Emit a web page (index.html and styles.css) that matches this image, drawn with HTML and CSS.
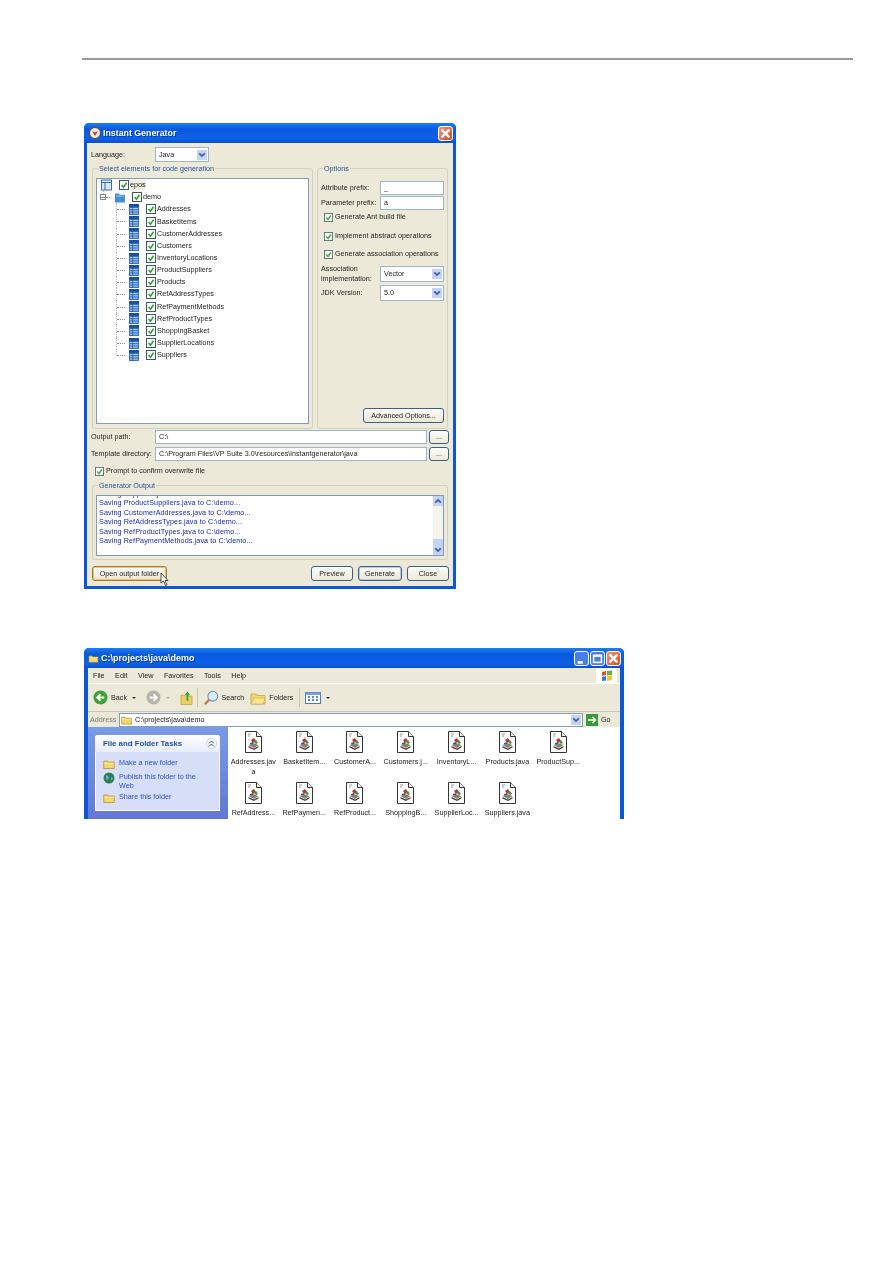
FILE: index.html
```html
<!DOCTYPE html>
<html lang="en">
<head>
<meta charset="utf-8">
<title>Instant Generator</title>
<link rel="stylesheet" href="styles.css">
</head>
<body>
<svg class="defs" width="0" height="0" aria-hidden="true">
  <symbol id="table" viewBox="0 0 11 12">
    <rect x="0" y="0" width="11" height="12" fill="#2f6fc4"/>
    <rect x="0" y="0" width="11" height="3" fill="#1a4f9c"/>
    <path d="M1 5h9M1 7.5h9M1 10h9" stroke="#cfe2fa" stroke-width="1"/>
    <path d="M4 3v9" stroke="#184a92" stroke-width=".7"/>
  </symbol>
  <symbol id="check" viewBox="0 0 10 10">
    <rect x=".5" y=".5" width="9" height="9" fill="#fff" stroke="#3a5a6a"/>
    <path d="M2.500 5l2 2.200 3-4.400" fill="none" stroke="#2aa32a" stroke-width="1.600"/>
  </symbol>
  <symbol id="arrow" viewBox="0 0 9 9">
    <rect width="9" height="9" fill="#c4d3f5"/>
    <path d="M2 3l2.500 2.500L7 3" fill="none" stroke="#3f5f9f" stroke-width="1.600"/>
  </symbol>
  <symbol id="jfile" viewBox="0 0 17 22">
    <path d="M.5.5h11l5 5v16H.5z" fill="#fff" stroke="#333"/>
    <path d="M11.500.5v5h5" fill="#eee" stroke="#333"/>
    <path d="M3 3h3M3 5h2" stroke="#999"/>
    <path d="M3.500 14l4.500-2 5.500 2-4.500 3z" fill="#8a8074"/>
    <path d="M6 9l3-2 2 3-3 2z" fill="#c0352d"/>
    <path d="M9 11l2-2 2 3-2 1z" fill="#3a9a3a"/>
    <path d="M5 12l3-1v2H5z" fill="#3456b5"/>
    <path d="M3.500 15l5.500 2.600 4.500-2.600v1.500l-4.500 2.500-5.500-2.500z" fill="#4a4238"/>
  </symbol>
  <symbol id="folder" viewBox="0 0 16 14">
    <path d="M1 3h5l1 1.500h8V13H1z" fill="#f6d76b" stroke="#b08a2a"/>
    <path d="M1 6h14" stroke="#fff0b0"/>
  </symbol>
</svg>

<main class="page">
  <hr class="rule">

  <section class="win dialog">
    <header class="titlebar">
      <svg class="app-icon" viewBox="0 0 12 12"><circle cx="6" cy="6" r="5.500" fill="#f4efe0" stroke="#7a3a20"/><path d="M3 4l3 5 3-5-3 1.500z" fill="#c5391e"/></svg>
      <span class="title">Instant Generator</span>
      <span class="wbtn close dlg-close"><svg viewBox="0 0 10 10"><path d="M2 2l6 6M8 2l-6 6" stroke="#fff" stroke-width="1.800"/></svg></span>
    </header>
    <div class="dialog-body">
      <div class="lang-row">
        <span class="lang-label">Language:</span>
        <span class="combo lang-combo"><span>Java</span><svg class="arr"><use href="#arrow"/></svg></span>
      </div>

      <div class="top-grid">
        <div class="group">
          <span class="legend">Select elements for code generation</span>
          <div class="tree">
            <div class="row lv0"><svg class="root-ic" viewBox="0 0 11 12"><rect x=".5" y="1" width="10" height="10" fill="#dbe8f8" stroke="#3a6ea8"/><path d="M.5 3.500h10M4 3.500V11" stroke="#3a6ea8"/></svg><svg class="ck"><use href="#check"/></svg><span class="sel">epos</span></div>
            <div class="row lv1"><span class="minus"></span><svg class="fold-ic" viewBox="0 0 11 11"><path d="M0 1h4l1 1.500h6V11H0z" fill="#3f8fd8"/><path d="M1 4h9" stroke="#9cc9f0"/></svg><svg class="ck"><use href="#check"/></svg><span>demo</span></div>
            <div class="row lv2"><span class="dash"></span><svg class="tb"><use href="#table"/></svg><svg class="ck"><use href="#check"/></svg><span>Addresses</span></div>
            <div class="row lv2"><span class="dash"></span><svg class="tb"><use href="#table"/></svg><svg class="ck"><use href="#check"/></svg><span>BasketItems</span></div>
            <div class="row lv2"><span class="dash"></span><svg class="tb"><use href="#table"/></svg><svg class="ck"><use href="#check"/></svg><span>CustomerAddresses</span></div>
            <div class="row lv2"><span class="dash"></span><svg class="tb"><use href="#table"/></svg><svg class="ck"><use href="#check"/></svg><span>Customers</span></div>
            <div class="row lv2"><span class="dash"></span><svg class="tb"><use href="#table"/></svg><svg class="ck"><use href="#check"/></svg><span>InventoryLocations</span></div>
            <div class="row lv2"><span class="dash"></span><svg class="tb"><use href="#table"/></svg><svg class="ck"><use href="#check"/></svg><span>ProductSuppliers</span></div>
            <div class="row lv2"><span class="dash"></span><svg class="tb"><use href="#table"/></svg><svg class="ck"><use href="#check"/></svg><span>Products</span></div>
            <div class="row lv2"><span class="dash"></span><svg class="tb"><use href="#table"/></svg><svg class="ck"><use href="#check"/></svg><span>RefAddressTypes</span></div>
            <div class="row lv2"><span class="dash"></span><svg class="tb"><use href="#table"/></svg><svg class="ck"><use href="#check"/></svg><span>RefPaymentMethods</span></div>
            <div class="row lv2"><span class="dash"></span><svg class="tb"><use href="#table"/></svg><svg class="ck"><use href="#check"/></svg><span>RefProductTypes</span></div>
            <div class="row lv2"><span class="dash"></span><svg class="tb"><use href="#table"/></svg><svg class="ck"><use href="#check"/></svg><span>ShoppingBasket</span></div>
            <div class="row lv2"><span class="dash"></span><svg class="tb"><use href="#table"/></svg><svg class="ck"><use href="#check"/></svg><span>SupplierLocations</span></div>
            <div class="row lv2 last"><span class="dash"></span><svg class="tb"><use href="#table"/></svg><svg class="ck"><use href="#check"/></svg><span>Suppliers</span></div>
          </div>
        </div>

        <div class="group options">
          <span class="legend">Options</span>
          <div class="opt-field"><span>Attribute prefix:</span><span class="input">_</span></div>
          <div class="opt-field"><span>Parameter prefix:</span><span class="input">a</span></div>
          <div class="opt-check first"><svg class="ck soft"><use href="#check"/></svg><span>Generate Ant build file</span></div>
          <div class="opt-check second"><svg class="ck soft"><use href="#check"/></svg><span>Implement abstract operations</span></div>
          <div class="opt-check"><svg class="ck soft"><use href="#check"/></svg><span>Generate association operations</span></div>
          <div class="opt-field assoc"><span>Association<br>implementation:</span><span class="combo"><span>Vector</span><svg class="arr"><use href="#arrow"/></svg></span></div>
          <div class="opt-field jdk"><span>JDK Version:</span><span class="combo"><span>5.0</span><svg class="arr"><use href="#arrow"/></svg></span></div>
          <div class="adv-row"><button class="btn adv">Advanced Options...</button></div>
        </div>
      </div>

      <div class="path-row first"><span class="path-label">Output path:</span><span class="input path">C:\</span><button class="btn dots">...</button></div>
      <div class="path-row"><span class="path-label">Template directory:</span><span class="input path">C:\Program Files\VP Suite 3.0\resources\instantgenerator\java</span><button class="btn dots">...</button></div>

      <div class="prompt"><svg class="ck soft"><use href="#check"/></svg><span>Prompt to confirm overwrite file</span></div>

      <div class="group output">
        <span class="legend">Generator Output</span>
        <div class="log">
          <div class="log-lines">
            <div class="clipline">Saving Suppliers.java to C:\demo...</div>
            <div>Saving ProductSuppliers.java to C:\demo...</div>
            <div>Saving CustomerAddresses.java to C:\demo...</div>
            <div>Saving RefAddressTypes.java to C:\demo...</div>
            <div>Saving RefProductTypes.java to C:\demo...</div>
            <div>Saving RefPaymentMethods.java to C:\demo...</div>
          </div>
          <div class="scroll">
            <span class="sb-btn"><svg viewBox="0 0 9 9"><path d="M2 6l2.500-2.500L7 6" fill="none" stroke="#3f5f9f" stroke-width="1.600"/></svg></span>
            <span class="sb-track"></span>
            <span class="sb-thumb"></span>
            <span class="sb-btn"><svg viewBox="0 0 9 9"><path d="M2 3l2.500 2.500L7 3" fill="none" stroke="#3f5f9f" stroke-width="1.600"/></svg></span>
          </div>
        </div>
      </div>

      <div class="actions">
        <span class="open-wrap">
          <button class="btn open">Open output folder</button>
          <svg class="cursor" viewBox="0 0 9 15"><path d="M1 1v10l2.500-2 2 4.500 1.500-.7-2-4.300H8z" fill="#fff" stroke="#222" stroke-width=".8"/></svg>
        </span>
        <span class="spacer"></span>
        <button class="btn preview">Preview</button>
        <button class="btn generate">Generate</button>
        <button class="btn closebtn">Close</button>
      </div>
    </div>
  </section>

  <section class="win explorer">
    <header class="titlebar ex-title">
      <svg class="ex-folder"><use href="#folder"/></svg>
      <span class="title">C:\projects\java\demo</span>
      <span class="wbtn blue"><svg viewBox="0 0 10 10"><path d="M2 8h4" stroke="#fff" stroke-width="2"/></svg></span>
      <span class="wbtn blue"><svg viewBox="0 0 10 10"><rect x="2" y="2.500" width="6" height="5.500" fill="none" stroke="#fff" stroke-width="1.200"/><path d="M2 3h6" stroke="#fff" stroke-width="1.500"/></svg></span>
      <span class="wbtn close"><svg viewBox="0 0 10 10"><path d="M2 2l6 6M8 2l-6 6" stroke="#fff" stroke-width="1.800"/></svg></span>
    </header>
    <nav class="menubar">
      <span>File</span><span>Edit</span><span>View</span><span>Favorites</span><span>Tools</span><span>Help</span>
      <span class="flag"><svg viewBox="0 0 12 12"><path d="M1 2l4-1v4l-4 1z" fill="#e2512b"/><path d="M6 1l5-.5V5L6 5.500z" fill="#6cb33f"/><path d="M1 7l4-1v4.500L1 11z" fill="#3a78d8"/><path d="M6 6l5-.5V10l-5 1z" fill="#f4c32e"/></svg></span>
    </nav>
    <div class="toolbar">
      <span class="tool back"><svg class="nav-ic" viewBox="0 0 16 16"><circle cx="8" cy="8" r="7.500" fill="#3aa53a"/><path d="M12 8H5M8 4.500L4.500 8 8 11.500" fill="none" stroke="#fff" stroke-width="2"/></svg><span>Back</span><i class="caret"></i></span>
      <span class="tool fwd"><svg class="nav-ic" viewBox="0 0 16 16"><circle cx="8" cy="8" r="7.500" fill="#b5b5aa"/><path d="M4 8h7M8 4.500L11.500 8 8 11.500" fill="none" stroke="#fff" stroke-width="2"/></svg><i class="caret pale"></i></span>
      <span class="tool up"><svg class="up-ic" viewBox="0 0 14 16"><path d="M1 5h4l1 1h7v9H1z" fill="#f0cf66" stroke="#b08a2a" stroke-width=".6"/><path d="M8 1l3 4H9v6H7V5H5z" fill="#3aa53a"/></svg></span>
      <span class="sep"></span>
      <span class="tool search"><svg class="search-ic" viewBox="0 0 18 18"><circle cx="11" cy="7" r="5.500" fill="#d8ecfb" stroke="#6e8fb5" stroke-width="1.200"/><path d="M7 11l-5 5" stroke="#b07a3a" stroke-width="2.400"/></svg><span>Search</span></span>
      <span class="tool folders"><svg class="folders-ic" viewBox="0 0 16 14"><path d="M1 3h5l1 1.500h8V13H1z" fill="#f6d76b" stroke="#c09a3a" stroke-width=".7"/><path d="M4 7h11l-2 6H1z" fill="#fbe493" stroke="#c09a3a" stroke-width=".5"/></svg><span>Folders</span></span>
      <span class="sep"></span>
      <span class="tool views"><svg class="views-ic" viewBox="0 0 16 12"><rect x=".5" y=".5" width="15" height="11" fill="#fff" stroke="#4d78c4"/><rect x=".5" y=".5" width="15" height="2.500" fill="#7aa0e0"/><path d="M3 5h2M7 5h2M11 5h2M3 8h2M7 8h2M11 8h2" stroke="#2f5fb5" stroke-width="1.400"/></svg><i class="caret"></i></span>
    </div>
    <div class="addressbar">
      <span class="addr-label">Address</span>
      <span class="addr-input"><svg class="addr-folder"><use href="#folder"/></svg><span class="addr-text">C:\projects\java\demo</span><svg class="arr"><use href="#arrow"/></svg></span>
      <span class="go"><svg class="go-ic" viewBox="0 0 12 12"><rect width="12" height="12" fill="#3a9a3a"/><path d="M2 6h7M6.500 3L9.500 6l-3 3" fill="none" stroke="#fff" stroke-width="1.600"/></svg><span>Go</span></span>
    </div>
    <div class="ex-body">
      <aside class="tasks">
        <div class="task-box">
          <div class="task-head"><span>File and Folder Tasks</span><span class="collapse"><svg viewBox="0 0 9 9"><path d="M2 4.500L4.500 2 7 4.500M2 7.500L4.500 5 7 7.500" fill="none" stroke="#2d4f9f"/></svg></span></div>
          <div class="task-list">
            <div class="task"><svg class="task-ic"><use href="#folder"/></svg><span>Make a new folder</span></div>
            <div class="task"><svg class="task-ic" viewBox="0 0 12 12"><circle cx="6" cy="6" r="5.500" fill="#2f7f4f"/><path d="M3 3l3 2-1 3-2-1zM8 5l2 1-2 3z" fill="#5fb3e8"/></svg><span>Publish this folder to the<br>Web</span></div>
            <div class="task"><svg class="task-ic"><use href="#folder"/></svg><span>Share this folder</span></div>
          </div>
        </div>
      </aside>
      <div class="files">
        <div class="file"><svg class="jf"><use href="#jfile"/></svg><span>Addresses.jav<br>a</span></div>
        <div class="file"><svg class="jf"><use href="#jfile"/></svg><span>BasketItem...</span></div>
        <div class="file"><svg class="jf"><use href="#jfile"/></svg><span>CustomerA...</span></div>
        <div class="file"><svg class="jf"><use href="#jfile"/></svg><span>Customers.j...</span></div>
        <div class="file"><svg class="jf"><use href="#jfile"/></svg><span>InventoryL...</span></div>
        <div class="file"><svg class="jf"><use href="#jfile"/></svg><span>Products.java</span></div>
        <div class="file"><svg class="jf"><use href="#jfile"/></svg><span>ProductSup...</span></div>
        <div class="file"><svg class="jf"><use href="#jfile"/></svg><span>RefAddress...</span></div>
        <div class="file"><svg class="jf"><use href="#jfile"/></svg><span>RefPaymen...</span></div>
        <div class="file"><svg class="jf"><use href="#jfile"/></svg><span>RefProduct...</span></div>
        <div class="file"><svg class="jf"><use href="#jfile"/></svg><span>ShoppingB...</span></div>
        <div class="file"><svg class="jf"><use href="#jfile"/></svg><span>SupplierLoc...</span></div>
        <div class="file"><svg class="jf"><use href="#jfile"/></svg><span>Suppliers.java</span></div>
      </div>
    </div>
  </section>
</main>
</body>
</html>
```
FILE: styles.css
```css
* { box-sizing: border-box; }
html, body { margin: 0; padding: 0; background: #fff; }
body { width: 893px; height: 1263px; overflow: hidden; font: 7.2px/10px "Liberation Sans", Arial, sans-serif; color: #1c1c1c; }
.defs { position: absolute; }
svg { display: block; flex: none; }
.page { padding-top: 58px; }
.rule { margin: 0 0 0 82px; width: 771px; height: 2px; border: 0; background: #999; }

.win { margin-left: 84px; background: #ece9d8; filter: blur(.4px); }
.dialog { margin-top: 63px; width: 372px; height: 466px; border: 3px solid #0a57d8; border-top: 0; border-radius: 5px 5px 0 0; display: flex; flex-direction: column; }
.titlebar { display: flex; align-items: center; background: linear-gradient(#1f7df0, #0a5ae0 30%, #0c60e8 80%, #0a50c8); color: #fff; margin: 0 -3px; padding: 0 3px 0 5px; height: 20px; flex: none; border-radius: 5px 5px 0 0; }
.app-icon { width: 12px; height: 12px; margin-right: 2px; }
.title { font: bold 8.8px/12px "Liberation Sans", Arial, sans-serif; flex: 1; text-shadow: 1px 1px 0 #0a3a9a; }
.wbtn { width: 15px; height: 15px; border: 1px solid #fff; border-radius: 3px; margin-left: 1px; background: #4a7de8; }
.wbtn svg { width: 13px; height: 13px; }
.wbtn.close { background: linear-gradient(135deg, #ec9a80, #d9481f); }

.dialog-body { flex: 1; display: flex; flex-direction: column; padding: 4px 4px 0 5px; }
.lang-row { display: flex; align-items: center; height: 15px; margin-left: -1px; }
.lang-label { width: 64px; }
.combo { display: flex; align-items: center; justify-content: space-between; background: #fff; border: 1px solid #9db5c8; padding: 0 1px 0 3px; height: 15px; }
.lang-combo { width: 54px; }
.arr { width: 10px; height: 12px; }

.top-grid { display: grid; grid-template-columns: 221px 131px; column-gap: 4px; height: 260px; margin-top: 6px; }
.group { position: relative; border: 1px solid #d4d0bf; border-radius: 3px; }
.legend { position: absolute; left: 5px; top: -5px; padding: 0 1px; background: #ece9d8; color: #1f4f9f; white-space: nowrap; }
.tree { margin: 9px 3px 4px 3px; height: 246px; background: #fff; border: 1px solid #7f9db9; }
.row { display: flex; align-items: center; height: 12.17px; white-space: nowrap; }
.lv0 { padding-left: 4px; }
.lv1 { padding-left: 3px; }
.lv2 { padding-left: 19px; }
.root-ic { width: 11px; height: 12px; margin-right: 7px; }
.fold-ic { width: 10px; height: 11px; margin: 0 7px 0 9px; }
.minus { position: relative; width: 6px; height: 6px; border: 1px solid #8a8a8a; background: linear-gradient(#8a8a8a, #8a8a8a) center/4px 1px no-repeat #fff; }
.minus::before { content: ""; position: absolute; left: 2px; top: -6px; height: 5px; border-left: 1px dotted #aaa; }
.minus::after { content: ""; position: absolute; left: 5px; top: 2px; width: 4px; border-top: 1px dotted #888; }
.dash { position: relative; align-self: stretch; width: 9px; margin-right: 4px; border-left: 1px dotted #bbb; }
.dash::after { content: ""; position: absolute; left: 0; top: 6px; width: 8px; border-top: 1px dotted #888; }
.last .dash { align-self: flex-start; height: 7px; }
.tb { width: 10px; height: 11px; margin-right: 7px; }
.ck { width: 10px; height: 10px; margin-right: 1px; }
.ck.soft { width: 9px; height: 9px; margin-right: 2px; opacity: .85; }
.sel { background: #f1efe2; }

.options { padding: 11px 3px 0 3px; display: flex; flex-direction: column; }
.opt-field { display: flex; align-items: center; justify-content: space-between; height: 15px; white-space: nowrap; }
.input { display: flex; align-items: center; background: #fff; border: 1px solid #9db5c8; padding: 0 3px; height: 14px; white-space: nowrap; }
.opt-field .input, .opt-field .combo { width: 64px; }
.opt-check { display: flex; align-items: center; height: 18px; padding-left: 3px; white-space: nowrap; }
.opt-check.first { margin-top: -2px; }
.opt-check.second { margin-top: 1px; }
.assoc { height: 16px; margin-top: 3px; line-height: 10px; }
.assoc .combo, .jdk .combo { height: 16px; }
.jdk { margin-top: 3px; height: 16px; }
.adv-row { display: flex; justify-content: flex-end; margin-top: auto; padding-bottom: 5px; }
.btn { font: inherit; color: inherit; background: linear-gradient(#fdfdfa, #ece9d8); border: 1px solid #3f5f8a; border-radius: 3px; padding: 0; height: 15px; }
.adv { width: 81px; }

.path-row { display: flex; align-items: center; height: 14px; margin-top: 3px; }
.path-row.first { margin-top: 2px; }
.path-label { width: 64px; margin-left: -1px; white-space: nowrap; }
.input.path { width: 272px; height: 14px; margin-right: 2px; }
.dots { width: 20px; height: 14px; line-height: 8px; }

.prompt { display: flex; align-items: center; height: 12px; margin: 4px 0 0 3px; }
.output { height: 75px; margin-top: 8px; width: 356px; }
.log { display: flex; margin: 9px 3px 0 3px; height: 61px; background: #fff; border: 1px solid #7f9db9; overflow: hidden; }
.log-lines { flex: 1; padding-left: 2px; color: #1a2aa8; line-height: 9.500px; letter-spacing: .1px; height: 59px; overflow: hidden; }
.clipline { margin-top: -7.500px; }
.scroll { width: 10px; display: flex; flex-direction: column; background: #f4f3ec; }
.sb-btn { height: 10px; background: #c4d3f5; }
.sb-btn svg { width: 10px; height: 10px; }
.sb-track { flex: 1; }
.sb-thumb { height: 6px; background: #c4d3f5; }

.actions { display: flex; height: 15px; margin-top: 6px; }
.open-wrap { position: relative; display: block; }
.open { width: 75px; border: 1px solid #a07a3a; box-shadow: inset 0 0 0 1px #f2c060; }
.cursor { position: absolute; left: 68px; top: 6px; width: 9px; height: 15px; }
.spacer { flex: 1; }
.preview { width: 42px; margin-right: 5px; }
.generate { width: 44px; margin-right: 5px; box-shadow: inset 0 0 0 1px #b5c8ef; }
.closebtn { width: 42px; }

.explorer { margin-top: 59px; width: 540px; height: 171px; border: 4px solid #0a57d8; border-top: 0; border-bottom: 0; border-radius: 5px 5px 0 0; display: flex; flex-direction: column; }
.ex-title { margin: 0 -4px; padding: 0 3px 0 4px; height: 20px; }
.ex-title .title { font-size: 9px; }
.ex-folder { width: 11px; height: 9px; margin-right: 2px; }
.ex-title .wbtn { width: 15px; height: 15px; margin-left: 1px; }
.menubar { display: flex; align-items: center; height: 16px; padding-left: 5px; gap: 10.500px; border-bottom: 1px solid #fff; color: #222; flex: none; }
.flag { margin: 0 3px 0 auto; background: #fff; width: 21px; height: 15px; display: flex; align-items: center; justify-content: center; }
.flag svg { width: 12px; height: 12px; }
.toolbar { display: flex; align-items: center; height: 28px; padding-left: 5px; flex: none; border-bottom: 1px solid #c8c5b3; }
.tool { display: flex; align-items: center; gap: 3px; }
.nav-ic { width: 15px; height: 15px; }
.caret { width: 0; height: 0; border: 2px solid transparent; border-top: 2.500px solid #333; border-bottom: 0; margin-left: 2px; }
.caret.pale { border-top-color: #aaa; }
.back { margin-right: 10.500px; }
.fwd { margin-right: 10px; }
.up-ic { width: 13px; height: 16px; }
.sep { width: 1px; height: 19px; background: #c8c5b3; margin: 0 5px 0 4px; }
.search { gap: 2px; margin: 0 6px 0 0; }
.search-ic { width: 16px; height: 16px; }
.folders-ic { width: 16px; height: 14px; }
.folders { margin-right: 2px; }
.views-ic { width: 16px; height: 12px; }
.addressbar { display: flex; align-items: center; height: 15px; flex: none; }
.addr-label { color: #777; width: 31px; padding-left: 2px; }
.addr-input { flex: 1; display: flex; align-items: center; height: 14px; background: #fff; border: 1px solid #7f9db9; padding: 0 1px; }
.addr-folder { width: 11px; height: 10px; margin-right: 3px; }
.addr-text { flex: 1; }
.go { display: flex; align-items: center; gap: 3px; width: 37px; padding-left: 3px; }
.go-ic { width: 12px; height: 12px; }
.ex-body { flex: 1; display: flex; min-height: 0; }
.tasks { width: 140px; background: linear-gradient(#7a9be6, #6377d6); padding: 8px 8px 0 7px; flex: none; }
.task-box { background: #d6dff7; height: 76px; border-radius: 3px 3px 0 0; border: 1px solid #fff; border-top: 0; }
.task-head { display: flex; align-items: center; justify-content: space-between; height: 17px; background: linear-gradient(#fff, #e8edfb); padding: 0 3px 0 8px; margin: 0 -1px; border-radius: 3px 3px 0 0; color: #1f4fa8; font-weight: bold; font-size: 7.800px; }
.collapse { width: 11px; height: 11px; border-radius: 50%; background: #fff; border: 1px solid #c8d4f0; }
.collapse svg { width: 9px; height: 9px; }
.task-list { padding: 6px 0 0 7px; color: #2a4fb8; }
.task { display: flex; align-items: flex-start; gap: 4px; line-height: 9px; margin-bottom: 2px; }
.task-ic { width: 12px; height: 12px; }
.files { flex: 1; background: #fff; display: grid; grid-template-columns: repeat(7, 50.8px); grid-auto-rows: 51px; padding: 4px 0 0 0; overflow: hidden; align-content: start; }
.file { display: flex; flex-direction: column; align-items: center; text-align: center; line-height: 9.500px; white-space: nowrap; color: #222; }
.jf { width: 17px; height: 22px; margin-bottom: 4px; }
```
